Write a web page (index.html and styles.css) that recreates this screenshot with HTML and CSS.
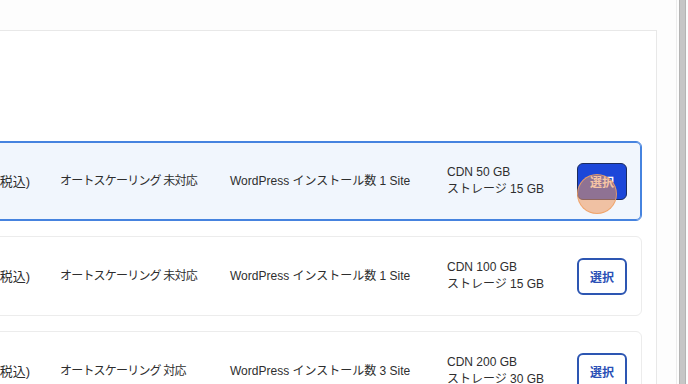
FILE: index.html
```html
<!DOCTYPE html>
<html lang="ja">
<head>
    <meta charset="UTF-8">
    <meta name="viewport" content="width=device-width, initial-scale=1.0">
    <title>プラン選択</title>
    <link rel="stylesheet" href="styles.css">
</head>
<body>

<div class="page">
    <div class="main">
        <div class="panel">
            <div class="plan selected">
                <div class="price">月額 1,100円(税込)</div>
                <div class="cell scaling">オートスケーリング 未対応</div>
                <div class="cell">WordPress インストール数 1 Site</div>
                <div class="cell">CDN 50 GB<br>ストレージ 15 GB</div>
                <div class="action">
                    <button type="button" class="select-button">選択</button>
                    <span class="click-mark"></span>
                </div>
            </div>
            <div class="plan">
                <div class="price">月額 1,650円(税込)</div>
                <div class="cell scaling">オートスケーリング 未対応</div>
                <div class="cell">WordPress インストール数 1 Site</div>
                <div class="cell">CDN 100 GB<br>ストレージ 15 GB</div>
                <div class="action">
                    <button type="button" class="select-button">選択</button>
                </div>
            </div>
            <div class="plan">
                <div class="price">月額 3,300円(税込)</div>
                <div class="cell scaling">オートスケーリング 対応</div>
                <div class="cell">WordPress インストール数 3 Site</div>
                <div class="cell">CDN 200 GB<br>ストレージ 30 GB</div>
                <div class="action">
                    <button type="button" class="select-button">選択</button>
                </div>
            </div>
        </div>
    </div>
    <div class="scrollbar">
        <div class="thumb"></div>
    </div>
</div>

</body>
</html>
```

FILE: styles.css
```css
body {
    margin: 0;
    background-color: #fdfdfd;
    font-family: "Liberation Sans", "Noto Sans CJK JP", sans-serif;
    font-size: 12px;
    color: #2e2e2e;
}
.page {
    display: flex;
    height: 384px;
    overflow: hidden;
}
.main {
    flex: 1;
    padding: 30px 19px 0 0;
}
.panel {
    margin-left: -300px;
    padding: 110px 14px 0 20px;
    background-color: #fff;
    border: 1px solid #e8e8e8;
    display: flex;
    flex-direction: column;
    gap: 15px;
}
.plan {
    display: grid;
    grid-template-columns: 338px 170px 217px 130px 50px;
    align-items: center;
    height: 78px;
    padding-right: 14px;
    border: 1px solid #ececec;
    border-radius: 6px;
    background-color: #fff;
    line-height: 17px;
}
.plan.selected {
    border-color: #4683df;
    box-shadow: inset 0 0 0 1px #4683df;
    background-color: #f1f6fd;
}
.price {
    text-align: right;
    padding-right: 30px;
    font-size: 13px;
}
.scaling {
    letter-spacing: -0.8px;
}
.action {
    position: relative;
    height: 37px;
}
.select-button {
    width: 50px;
    height: 37px;
    border: 2px solid #2d56b2;
    border-radius: 6px;
    background-color: #fff;
    color: #2b50b6;
    font-family: inherit;
    font-size: 12px;
    font-weight: bold;
    padding: 0;
    cursor: pointer;
}
.selected .select-button {
    background-color: #1c47d9;
    border: 1.5px solid #1b2b5e;
    color: #fff;
}
.click-mark {
    position: absolute;
    left: 0;
    top: 11px;
    width: 38px;
    height: 38px;
    border-radius: 50%;
    background-color: rgba(238, 150, 90, 0.55);
    border: 1.5px solid rgba(240, 160, 100, 0.85);
}
.scrollbar {
    width: 11px;
    border-left: 1px solid #ececec;
    background-color: #fdfdfd;
    padding-left: 2px;
}
.thumb {
    width: 7px;
    height: 100%;
    background-color: #c6c6c6;
    border-left: 1px solid #b4b4b4;
    border-right: 1px solid #b4b4b4;
    box-sizing: border-box;
}
```
